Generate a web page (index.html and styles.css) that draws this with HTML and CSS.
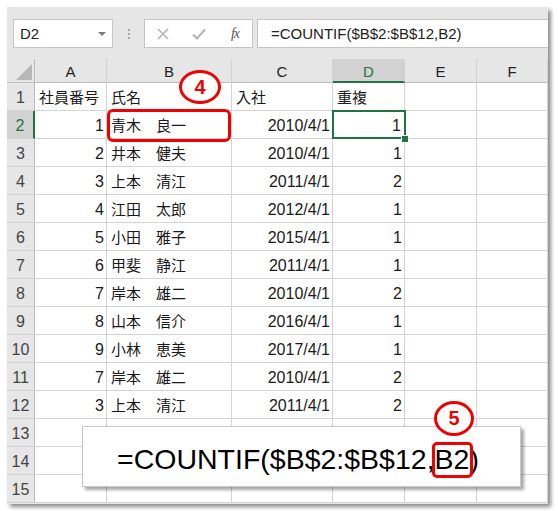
FILE: index.html
```html
<!DOCTYPE html>
<html lang="ja">
<head>
<meta charset="utf-8">
<title>COUNTIF</title>
<link rel="stylesheet" href="styles.css">
</head>
<body>
<div class="window">
  <div class="toolbar">
    <div class="namebox"><span>D2</span><span class="caret"></span></div>
    <div class="grip"><i></i><i></i><i></i></div>
    <div class="fbtns">
      <span class="btn"><svg width="12" height="12" viewBox="0 0 12 12"><path d="M1 1 L11 11 M11 1 L1 11" stroke="#b4b4b4" stroke-width="1.6" fill="none"/></svg></span>
      <span class="btn"><svg width="14" height="12" viewBox="0 0 14 12"><path d="M1 6.5 L5 10.5 L13 1.5" stroke="#b4b4b4" stroke-width="2" fill="none"/></svg></span>
      <span class="btn fx">fx</span>
    </div>
    <div class="finput">=COUNTIF($B$2:$B$12,B2)</div>
  </div>
  <div class="sheet">
    <div class="corner"></div>
    <div class="ch">A</div><div class="ch">B</div><div class="ch">C</div><div class="ch sel">D</div><div class="ch">E</div><div class="ch">F</div>

    <div class="rh">1</div><div class="c jp">社員番号</div><div class="c jp">氏名</div><div class="c jp">入社</div><div class="c jp">重複</div><div class="c"></div><div class="c"></div>
    <div class="rh sel">2</div><div class="c r">1</div><div class="c jp">青木　良一</div><div class="c r">2010/4/1</div><div class="c r act">1</div><div class="c"></div><div class="c"></div>
    <div class="rh">3</div><div class="c r">2</div><div class="c jp">井本　健夫</div><div class="c r">2010/4/1</div><div class="c r">1</div><div class="c"></div><div class="c"></div>
    <div class="rh">4</div><div class="c r">3</div><div class="c jp">上本　清江</div><div class="c r">2011/4/1</div><div class="c r">2</div><div class="c"></div><div class="c"></div>
    <div class="rh">5</div><div class="c r">4</div><div class="c jp">江田　太郎</div><div class="c r">2012/4/1</div><div class="c r">1</div><div class="c"></div><div class="c"></div>
    <div class="rh">6</div><div class="c r">5</div><div class="c jp">小田　雅子</div><div class="c r">2015/4/1</div><div class="c r">1</div><div class="c"></div><div class="c"></div>
    <div class="rh">7</div><div class="c r">6</div><div class="c jp">甲斐　静江</div><div class="c r">2011/4/1</div><div class="c r">1</div><div class="c"></div><div class="c"></div>
    <div class="rh">8</div><div class="c r">7</div><div class="c jp">岸本　雄二</div><div class="c r">2010/4/1</div><div class="c r">2</div><div class="c"></div><div class="c"></div>
    <div class="rh">9</div><div class="c r">8</div><div class="c jp">山本　信介</div><div class="c r">2016/4/1</div><div class="c r">1</div><div class="c"></div><div class="c"></div>
    <div class="rh">10</div><div class="c r">9</div><div class="c jp">小林　恵美</div><div class="c r">2017/4/1</div><div class="c r">1</div><div class="c"></div><div class="c"></div>
    <div class="rh">11</div><div class="c r">7</div><div class="c jp">岸本　雄二</div><div class="c r">2010/4/1</div><div class="c r">2</div><div class="c"></div><div class="c"></div>
    <div class="rh">12</div><div class="c r">3</div><div class="c jp">上本　清江</div><div class="c r">2011/4/1</div><div class="c r">2</div><div class="c"></div><div class="c"></div>
    <div class="rh">13</div><div class="c"></div><div class="c"></div><div class="c"></div><div class="c"></div><div class="c"></div><div class="c"></div>
    <div class="rh">14</div><div class="c"></div><div class="c"></div><div class="c"></div><div class="c"></div><div class="c"></div><div class="c"></div>
    <div class="rh">15</div><div class="c"></div><div class="c"></div><div class="c"></div><div class="c"></div><div class="c"></div><div class="c"></div>
  </div>

  <div class="hlrow"></div>
  <div class="mark mark4">4</div>
  <div class="callout">=COUNTIF($B$2:$B$12,<span class="hl">B2</span>)</div>
  <div class="mark mark5">5</div>
</div>
</body>
</html>
```

FILE: styles.css
```css
html, body {
  margin: 0;
  padding: 0;
}
body {
  width: 558px;
  height: 511px;
  overflow: hidden;
  background: #ffffff;
  font-family: "Liberation Sans", "Noto Sans CJK JP", sans-serif;
}
.window {
  position: relative;
  margin: 7px 0 0 7px;
  width: 541px;
  height: 497px;
  background: #e6e6e6;
  box-shadow: 3px 3px 4px rgba(0, 0, 0, 0.45);
}

/* toolbar */
.toolbar {
  height: 52px;
  box-sizing: border-box;
  padding: 12px 0 0 6px;
  display: flex;
  align-items: flex-start;
}
.namebox {
  width: 100px;
  height: 29px;
  box-sizing: border-box;
  background: #fff;
  border: 1px solid #c6c6c6;
  display: flex;
  align-items: center;
  padding-left: 6px;
  font-size: 15px;
  color: #222;
}
.caret {
  margin-left: auto;
  margin-right: 6px;
  width: 0;
  height: 0;
  border-left: 4px solid transparent;
  border-right: 4px solid transparent;
  border-top: 4px solid #7a7a7a;
}
.grip {
  width: 31px;
  height: 29px;
  display: flex;
  flex-direction: column;
  align-items: center;
  justify-content: center;
  gap: 2px;
}
.grip i {
  display: block;
  width: 2px;
  height: 2px;
  background: #a8a8a8;
}
.fbtns {
  width: 109px;
  height: 29px;
  box-sizing: border-box;
  background: #fff;
  border: 1px solid #c6c6c6;
  display: grid;
  grid-template-columns: 36px 36px 36px;
  align-items: center;
  justify-items: center;
}
.btn {
  display: flex;
  align-items: center;
  justify-content: center;
}
.fx {
  font-family: "Liberation Serif", serif;
  font-style: italic;
  font-size: 14px;
  color: #555;
  letter-spacing: -1px;
}
.finput {
  flex: 1;
  margin-left: 4px;
  height: 29px;
  box-sizing: border-box;
  background: #fff;
  border: 1px solid #c6c6c6;
  border-right: none;
  padding-left: 13px;
  display: flex;
  align-items: center;
  font-size: 15px;
  color: #222;
}

/* sheet */
.sheet {
  display: grid;
  grid-template-columns: 28px 72px 125px 101px 72px 72px 71px;
  grid-template-rows: 24px repeat(15, 28px);
  background: #fff;
}
.corner {
  position: relative;
  background: #e6e6e6;
  border-right: 1px solid #bdbdbd;
  border-bottom: 1px solid #bdbdbd;
}
.corner::after {
  content: "";
  position: absolute;
  right: 2px;
  bottom: 2px;
  width: 16px;
  height: 16px;
  background: #b7b7b7;
  clip-path: polygon(100% 0, 100% 100%, 0 100%);
}
.ch {
  background: #e6e6e6;
  border-right: 1px solid #d2d2d2;
  border-bottom: 1px solid #bdbdbd;
  display: flex;
  align-items: center;
  justify-content: center;
  font-size: 15px;
  color: #222;
  padding-top: 2px;
  box-sizing: border-box;
}
.ch.sel {
  background: #d2d2d2;
  color: #217346;
  border-bottom: 2px solid #217346;
}
.rh {
  background: #e6e6e6;
  border-right: 1px solid #bdbdbd;
  border-bottom: 1px solid #d2d2d2;
  display: flex;
  align-items: center;
  justify-content: center;
  font-size: 16px;
  color: #444;
  padding-top: 2px;
  box-sizing: border-box;
}
.rh.sel {
  background: #d2d2d2;
  color: #217346;
  border-right: 2px solid #217346;
}
.c {
  box-sizing: border-box;
  border-right: 1px solid #d4d4d4;
  border-bottom: 1px solid #d4d4d4;
  display: flex;
  align-items: center;
  padding: 2px 3px 0 3px;
  font-size: 16px;
  color: #1a1a1a;
  white-space: nowrap;
  overflow: hidden;
}
.c.r {
  justify-content: flex-end;
  padding-right: 2px;
}
.c.jp {
  font-family: "Noto Sans CJK JP", sans-serif;
  font-size: 15px;
  padding-left: 4px;
  padding-top: 0;
}
.c.act {
  position: relative;
  overflow: visible;
  z-index: 2;
  padding-right: 3px;
}
.c.act::before {
  content: "";
  position: absolute;
  left: -1px;
  top: -1px;
  right: -2px;
  bottom: -1px;
  border: 2px solid #217346;
}
.c.act::after {
  content: "";
  position: absolute;
  right: -5px;
  bottom: -5px;
  width: 6px;
  height: 6px;
  background: #217346;
  border: 1px solid #fff;
}

/* annotations */
.hlrow {
  position: absolute;
  left: 100px;
  top: 102px;
  width: 124px;
  height: 33px;
  box-sizing: border-box;
  border: 3px solid #f00000;
  border-radius: 6px;
  z-index: 3;
}
.mark {
  position: absolute;
  box-sizing: border-box;
  border: 3px solid #f00000;
  border-radius: 50%;
  background: #fff;
  color: #f00000;
  font-weight: bold;
  font-size: 20px;
  display: flex;
  align-items: center;
  justify-content: center;
  z-index: 5;
}
.mark4 {
  left: 172px;
  top: 63px;
  width: 42px;
  height: 34px;
}
.mark5 {
  left: 427px;
  top: 394px;
  width: 40px;
  height: 35px;
}
.callout {
  position: absolute;
  left: 75px;
  top: 419px;
  width: 439px;
  height: 61px;
  box-sizing: border-box;
  background: #fff;
  border: 1px solid #c8c8c8;
  box-shadow: 3px 3px 3px rgba(0, 0, 0, 0.35);
  padding: 5px 0 0 34px;
  display: flex;
  align-items: center;
  font-size: 28.5px;
  color: #000;
  z-index: 4;
  white-space: nowrap;
}
.hl {
  position: relative;
}
.hl::after {
  content: "";
  position: absolute;
  left: -3px;
  right: -4px;
  top: -1px;
  bottom: -2px;
  border: 3px solid #f00000;
  border-radius: 5px;
}
```
